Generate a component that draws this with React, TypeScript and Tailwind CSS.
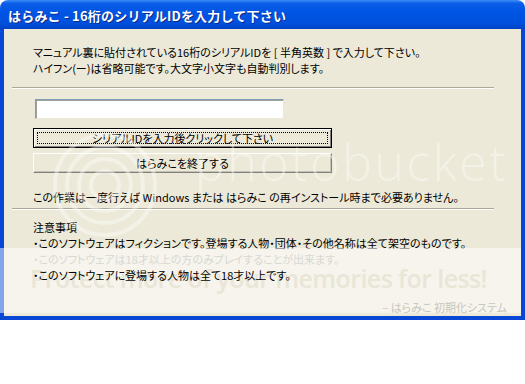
import {FC} from "react";

const jp = {fontFamily: '"Noto Sans CJK JP", "Noto Sans", sans-serif'};

// Photobucket-ish rings, drawn faint over the dialog
const Rings: FC = () => (
	<svg width="120" height="120" viewBox="0 0 120 120" className="absolute left-[45px] top-[125px] pointer-events-none">
		{[14, 26, 38, 50].map((r) => (
			<circle key={r} cx="60" cy="60" r={r} fill="none" stroke="#ffffff" strokeOpacity="0.4" strokeWidth="4" />
		))}
	</svg>
);

const Separator: FC = () => (
	<div className="ml-[8px] w-[482px] border-t border-t-[#aca899] border-b border-b-white" />
);

const App: FC = () => {
	return (
		<div className="w-[525px] h-[384px] bg-white" style={jp}>
			<div className="relative w-[525px] h-[320px] flex flex-col">
				{/* Title bar */}
				<div className="h-[29px] rounded-t-[8px] bg-[linear-gradient(180deg,#3c8cf7_0%,#0a5de8_12%,#0054e3_45%,#0050dd_80%,#0043c4_100%)] flex items-center pl-[8px] pt-[2px]">
					<span className="text-white text-[13px] font-bold tracking-[0.2px] [text-shadow:1px_1px_0_#0a2a8a]">
						はらみこ - 16桁のシリアルIDを入力して下さい
					</span>
				</div>
				{/* Body */}
				<div className="flex-1 bg-[#ece9d8] border-l-[4px] border-r-[4px] border-b-[4px] border-[#0846d6] flex flex-col text-[11px] leading-[16px] tracking-[0px] [font-feature-settings:'palt'] text-black">
					<div className="pt-[15px] pl-[29px] whitespace-nowrap">
						<p>マニュアル裏に貼付されている16桁のシリアルIDを&nbsp;[&nbsp;半角英数&nbsp;]&nbsp;で入力して下さい。</p>
						<p>ハイフン(ー)は省略可能です。大文字小文字も自動判別します。</p>
					</div>
					<div className="mt-[11px]">
						<Separator />
					</div>
					<div className="pl-[31px] mt-[10px]">
						<div className="w-[249px] h-[20px] bg-white border-t border-l border-t-[#7f9db9] border-l-[#7f9db9] border-b border-r border-b-[#ece9d8] border-r-[#ece9d8] shadow-[inset_1px_1px_0_#a0a0a0]" />
					</div>
					<div className="pl-[29px] mt-[9px] flex flex-col gap-[5px]">
						<button className="relative w-[299px] h-[20px] bg-[#ece9d8] border border-black shadow-[inset_1px_1px_0_#ffffff,inset_-1px_-1px_0_#808080] flex items-center justify-center p-0">
							<span className="absolute inset-[3px] border border-dotted border-black" />
							<span className="relative text-[11px] leading-none [font-feature-settings:'palt']">シリアルIDを入力後クリックして下さい</span>
						</button>
						<button className="w-[299px] h-[20px] bg-[#ece9d8] border border-t-white border-l-white border-b-[#808080] border-r-[#808080] shadow-[inset_-1px_-1px_0_#c5c2b2] flex items-center justify-center p-0">
							<span className="text-[11px] leading-none [font-feature-settings:'palt']">はらみこを終了する</span>
						</button>
					</div>
					<p className="pl-[29px] mt-[16px] whitespace-nowrap">この作業は一度行えば&nbsp;Windows&nbsp;または&nbsp;はらみこ&nbsp;の再インストール時まで必要ありません。</p>
					<div className="mt-[3px]">
						<Separator />
					</div>
					<div className="pl-[29px] mt-[9px] whitespace-nowrap">
						<p>注意事項</p>
						<p>・このソフトウェアはフィクションです。登場する人物・団体・その他名称は全て架空のものです。</p>
						<p className="text-[#b0afa8]">・このソフトウェアは18才以上の方のみプレイすることが出来ます。</p>
						<p className="relative z-20">・このソフトウェアに登場する人物は全て18才以上です。</p>
					</div>
					<p className="relative z-20 mt-[16px] ml-auto mr-[14px] text-[#c8c6bd]">–&nbsp;はらみこ&nbsp;初期化システム</p>
				</div>
				{/* Watermark */}
				<Rings />
				<span
					className="absolute left-[195px] top-[125px] text-[50px] font-light text-white/40 tracking-[2.5px] pointer-events-none"
					style={{fontFamily: '"Open Sans", sans-serif'}}
				>
					photobucket
				</span>
				<div className="absolute left-0 top-[248px] w-[521px] h-[65px] bg-white/50 z-10 pointer-events-none flex items-start pl-[30px]">
					<span
						className="mt-[15px] text-[25px] leading-[30px] font-semibold tracking-[-0.6px] text-[#e9e6d7]"
						style={{fontFamily: '"Open Sans", sans-serif'}}
					>
						Protect more of your memories for less!
					</span>
				</div>
			</div>
		</div>
	);
};

export default App;
